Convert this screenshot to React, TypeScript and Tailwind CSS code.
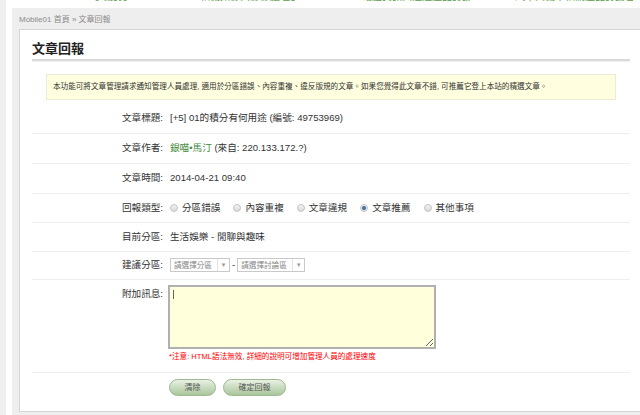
import type { ReactNode } from "react";

const FONT = "font-['Liberation_Sans','Noto_Sans_CJK_TC',sans-serif]";

function TopLinks() {
  // the page header above is scrolled off; only the feet of its green links show
  const links = [
    { ml: "ml-[81px]", w: "w-[34px]", text: "手機討論" },
    { ml: "ml-[73px]", w: "w-[95px]", text: "相機攝影與影像處理器" },
    { ml: "ml-[67px]", w: "w-[108px]", text: "電腦資訊與週邊產品討論" },
    { ml: "ml-[45px]", w: "w-[118px]", text: "汽車與機車相關產品討論區" },
  ];
  return (
    <div className="flex h-[8px] shrink-0 overflow-hidden bg-white">
      {links.map((l) => (
        <span
          key={l.text}
          className={`${l.ml} ${l.w} -mt-[9px] block shrink-0 overflow-hidden whitespace-nowrap text-[10px] leading-[11px] text-[#5b9a4a]`}
        >
          {l.text}
        </span>
      ))}
    </div>
  );
}

function Row({
  label,
  children,
  h,
}: {
  label: string;
  children: ReactNode;
  h: string;
}) {
  return (
    <div className={`flex ${h} items-center border-b border-[#eeeeee]`}>
      <div className="w-[131px] shrink-0 text-right text-[#333]">{label}</div>
      <div className="ml-[7px] flex items-center text-[#333]">{children}</div>
    </div>
  );
}

function Radio({ label, checked }: { label: string; checked?: boolean }) {
  return (
    <span className="mr-[13px] flex items-center">
      <span className="flex h-[8px] w-[8px] items-center justify-center rounded-full border border-[#c4c4c4] bg-gradient-to-b from-[#f4f4f4] to-[#d9d9d9]">
        {checked && <span className="h-[4px] w-[4px] rounded-full bg-[#3f6f9f]" />}
      </span>
      <span className="ml-[4px]">{label}</span>
    </span>
  );
}

function FakeSelect({ label, w }: { label: string; w: string }) {
  return (
    <span
      className={`flex h-[14px] ${w} items-center border border-[#c9c9c9] bg-white text-[7.6px] text-[#888]`}
    >
      <span className="flex-1 pl-[3px]">{label}</span>
      <span className="flex h-full w-[12px] items-center justify-center border-l border-[#e2e2e2] text-[6px] text-[#999]">
        ▼
      </span>
    </span>
  );
}

function PillButton({ children, w }: { children: ReactNode; w: string }) {
  return (
    <button
      type="button"
      className={`h-[17px] ${w} rounded-full border border-[#9db78f] bg-gradient-to-b from-[#e9f1e4] to-[#a9c69b] text-[8px] leading-none text-[#555]`}
    >
      {children}
    </button>
  );
}

export default function App() {
  return (
    <div className={`flex h-[415px] w-[640px] overflow-hidden bg-white text-[9.6px] ${FONT}`}>
      <div className="w-[6px] shrink-0 bg-[#efefef]" />
      <div className="ml-[6px] flex min-w-0 flex-1 flex-col">
        <TopLinks />
        <div className="flex flex-1 flex-col bg-[#eeeeee] pl-[7px]">
          <div className="flex h-[21px] shrink-0 items-center pt-[2px] text-[8px] text-[#8a8a8a]">
            Mobile01 首頁 » 文章回報
          </div>

          <div className="mb-[3px] flex flex-1 flex-col border-t border-b border-l border-[#d6d6d6] bg-white pl-[12px] pr-[10px]">
            <div className="pt-[11px] pb-[2px] text-[13px] font-bold leading-[16px] text-[#222]">
              文章回報
            </div>
            <div className="h-[2px] bg-[#d9d9d9]" />
            <div className="h-[1px] bg-[#efefef]" />

            <div className="mx-[14px] mt-[12px] flex h-[26px] items-center border border-[#ebebd8] bg-[#ffffdf] pl-[6px] text-[7.6px] text-[#333]">
              本功能可將文章管理請求通知管理人員處理, 適用於分區錯誤、內容重複、違反版規的文章。如果您覺得此文章不錯, 可推薦它登上本站的精選文章。
            </div>

            <div className="mt-[4px] flex flex-col">
              <Row label="文章標題:" h="h-[30px]">
                [+5] 01的積分有何用途 (編號: 49753969)
              </Row>
              <Row label="文章作者:" h="h-[30px]">
                <span className="text-[#3f8a3a]">銀喵•馬汀</span>
                <span>&nbsp;(來自: 220.133.172.?)</span>
              </Row>
              <Row label="文章時間:" h="h-[30px]">
                2014-04-21 09:40
              </Row>
              <Row label="回報類型:" h="h-[29px]">
                <Radio label="分區錯誤" />
                <Radio label="內容重複" />
                <Radio label="文章違規" />
                <Radio label="文章推薦" checked />
                <Radio label="其他事項" />
              </Row>
              <Row label="目前分區:" h="h-[29px]">
                生活娛樂 - 閒聊與趣味
              </Row>
              <Row label="建議分區:" h="h-[28px]">
                <FakeSelect label="請選擇分區" w="w-[60px]" />
                <span className="mx-[2px]">-</span>
                <FakeSelect label="請選擇討論區" w="w-[68px]" />
              </Row>

              <div className="flex items-start border-b border-[#eeeeee] pt-[5px] pb-[10px]">
                <div className="mt-[3px] w-[131px] shrink-0 text-right leading-[12px] text-[#333]">
                  附加訊息:
                </div>
                <div className="ml-[5px] flex flex-col">
                  <div className="relative">
                    <textarea className="block h-[64px] w-[268px] border-2 border-[#b0b0b0] bg-[#ffffdc] outline-none" />
                    <span className="absolute top-[5px] left-[5px] h-[9px] w-px bg-[#666]" />
                  </div>
                  <div className="mt-[3px] ml-[1px] text-[7.6px] leading-[10px] text-[#ff0000]">
                    *注意: HTML語法無效, 詳細的說明可增加管理人員的處理速度
                  </div>
                </div>
              </div>

              <div className="flex gap-[7px] pt-[6px] pl-[137px]">
                <PillButton w="w-[47px]">清除</PillButton>
                <PillButton w="w-[63px]">確定回報</PillButton>
              </div>
            </div>
          </div>
        </div>
      </div>
    </div>
  );
}
